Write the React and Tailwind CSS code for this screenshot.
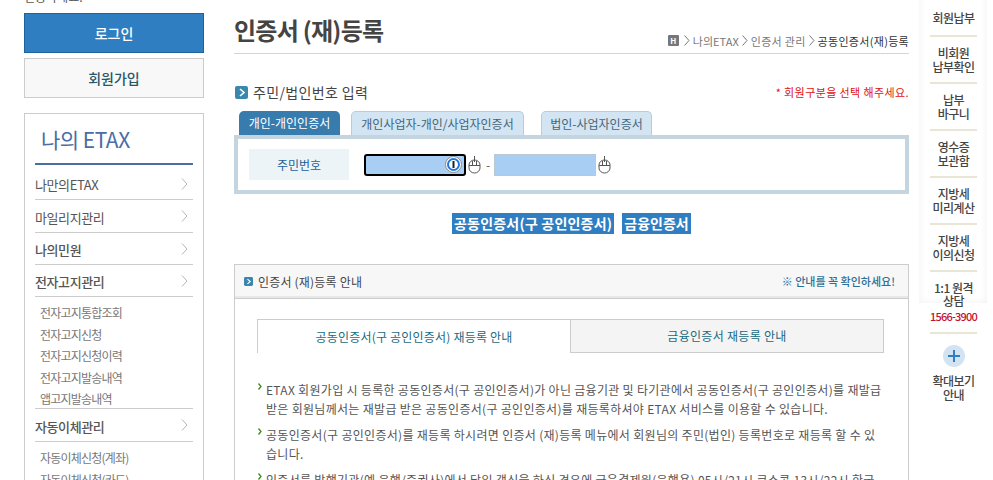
import React from "react";

const font = { fontFamily: '"Noto Sans CJK KR", "Noto Sans", sans-serif' };

const Chevron = () => (
  <svg width="7" height="12" viewBox="0 0 7 12" className="shrink-0">
    <path d="M1 0.5 L6 6 L1 11.5" fill="none" stroke="#b5b5b5" strokeWidth="1" />
  </svg>
);

const CrumbArrow = () => (
  <svg width="6" height="11" viewBox="0 0 6 11" className="shrink-0">
    <path d="M0.5 0.5 L5 5.5 L0.5 10.5" fill="none" stroke="#777" strokeWidth="1" />
  </svg>
);

const Mouse = () => (
  <svg width="13" height="18" viewBox="0 0 13 18" className="shrink-0">
    <path d="M6.5 0 V6 M1 9 a5.5 5 0 0 1 11 0 V12 a5.5 5 0 0 1 -11 0 Z M1 9.5 H12 M4.5 5 V9.5 M8.5 5 V9.5" fill="none" stroke="#555" strokeWidth="1" />
  </svg>
);

const SquareArrow = ({ size = 13 }) => (
  <svg width={size} height={size} viewBox="0 0 13 13" className="shrink-0">
    <rect width="13" height="13" rx="2" fill="#3a86ad" />
    <path d="M5 3 L9 6.5 L5 10" fill="none" stroke="#fff" strokeWidth="1.6" />
  </svg>
);

const KeyIcon = () => (
  <svg width="17" height="17" viewBox="0 0 17 17" className="shrink-0">
    <circle cx="8.5" cy="8.5" r="8" fill="#fff" stroke="#8a8a8a" strokeWidth="1" />
    <circle cx="8.5" cy="8.5" r="5.5" fill="#fff" stroke="#1e7ae0" strokeWidth="2" />
    <rect x="7.5" y="5" width="2" height="7" fill="#222" />
  </svg>
);

const MenuRow = ({ label, h, bold }) => (
  <div className={`flex items-center justify-between border-b border-[#cccccc] ${h} pr-[5px]`}>
    <span className={`mt-[3px] text-[13px] text-[#555] tracking-[-0.4px] ${bold ? "font-medium" : ""}`}>{label}</span>
    <Chevron />
  </div>
);

const SubRow = ({ label }) => (
  <div className="h-[21.5px] leading-[21.5px] text-[12px] text-[#777] tracking-[-0.8px]">{label}</div>
);

const subMenu1 = ["전자고지통합조회", "전자고지신청", "전자고지신청이력", "전자고지발송내역", "앱고지발송내역"];
const subMenu2 = ["자동이체신청(계좌)", "자동이체신청(카드)"];

const Sidebar = () => (
  <aside className="w-[180px] ml-[24px] shrink-0">
    <div className="h-[13px] overflow-hidden relative">
      <div className="text-[12px] leading-[18px] text-[#555] mt-[-12px]">인증하세요.</div>
    </div>
    <div className="h-[40px] bg-[#2f7ec1] border border-[#1f639c] flex items-center justify-center text-white text-[14px] font-medium">
      로그인
    </div>
    <div className="h-[40px] mt-[5px] bg-[#f8f8f8] border border-[#cccccc] flex items-center justify-center text-[#2a5566] text-[14px] font-medium">
      회원가입
    </div>
    <div className="mt-[15px] border border-[#cccccc] px-[10px] pb-[20px]">
      <div className="h-[51px] border-b-2 border-[#4a6da3] pl-[6px] pt-[10px] text-[21px] leading-[30px] text-[#4a6da3] tracking-[-0.5px]">
        나의 ETAX
      </div>
      <MenuRow label="나만의ETAX" h="h-[35px] pt-[3px]" />
      <MenuRow label="마일리지관리" h="h-[33px]" />
      <MenuRow label="나의민원" h="h-[32px]" bold />
      <MenuRow label="전자고지관리" h="h-[32px]" bold />
      <div className="border-b border-[#cccccc] pl-[5px] pt-[5px] h-[112px]">
        {subMenu1.map((s) => (
          <SubRow key={s} label={s} />
        ))}
      </div>
      <MenuRow label="자동이체관리" h="h-[33px]" bold />
      <div className="pl-[5px] pt-[5px]">
        {subMenu2.map((s) => (
          <SubRow key={s} label={s} />
        ))}
      </div>
    </div>
  </aside>
);

const Tab = ({ label, active, w, ml }) => (
  <div
    className={`${w} ${ml} h-[24px] rounded-t-[5px] flex items-center justify-center text-[12px] ${
      active
        ? "bg-[#387bad] text-white"
        : "bg-[#d3e4f2] border border-b-0 border-[#b5cddd] text-[#44667a]"
    }`}
  >
    {label}
  </div>
);

const Bullet = ({ children }) => (
  <li className="flex gap-[4px]">
    <svg width="4" height="7" viewBox="0 0 4 7" className="shrink-0 mt-[3px] ml-[1px]">
      <path d="M0.5 0.5 L3 3.5 L0.5 6.5" fill="none" stroke="#3c8a1a" strokeWidth="1.3" />
    </svg>
    <span className="tracking-[0.3px]">{children}</span>
  </li>
);

const Main = () => (
  <main className="w-[675px] ml-[30px] shrink-0">
    <div className="h-[54px] border-b border-[#d5d5d5] flex items-end justify-between pb-[3px]">
      <h1 className="text-[24px] leading-[36px] font-bold text-[#444] tracking-[-0.75px] mb-[2px]">인증서 (재)등록</h1>
      <div className="flex items-center gap-[3px] text-[11px] text-[#777] pb-[1px]">
        <span className="w-[11px] h-[11px] mr-[2px] bg-[#777] rounded-[1px] text-white text-[8px] leading-[11px] text-center font-bold">H</span>
        <CrumbArrow />
        <span>나의ETAX</span>
        <CrumbArrow />
        <span className="tracking-[0.3px]">인증서 관리</span>
        <CrumbArrow />
        <span className="text-[#333] tracking-[0.3px]">공동인증서(재)등록</span>
      </div>
    </div>
    <div className="mt-[29px] h-[18px] flex items-center justify-between">
      <div className="flex items-center gap-[5px] pl-[1px] text-[14px] text-[#444]">
        <SquareArrow />
        <span className="tracking-[0.35px]">주민/법인번호 입력</span>
      </div>
      <div className="text-[11px] text-[#e01010] tracking-[0.4px]">* 회원구분을 선택 해주세요.</div>
    </div>
    <div className="mt-[10px] flex pl-[5px] h-[24px]">
      <Tab label="개인-개인인증서" active w="w-[101px]" />
      <Tab label="개인사업자-개인/사업자인증서" w="w-[173px]" ml="ml-[11px]" />
      <Tab label="법인-사업자인증서" w="w-[111px]" ml="ml-[17px]" />
    </div>
    <div className="h-[59px] border-[4px] border-[#c5d5e0] flex items-center pl-[11px]">
      <div className="w-[100px] h-[31px] bg-[#edf4f7] flex items-center justify-center text-[12px] text-[#23609a]">주민번호</div>
      <div className="ml-[15px] w-[102px] h-[22px] bg-[#a8cff3] border-2 border-black rounded-[3px] flex items-center justify-end pr-[2px]">
        <KeyIcon />
      </div>
      <span className="ml-[2px]"><Mouse /></span>
      <span className="ml-[5px] text-[12px] text-[#555]">-</span>
      <div className="ml-[4px] w-[102px] h-[22px] bg-[#a8cff3] border border-[#b8c8d4]" />
      <span className="ml-[2px]"><Mouse /></span>
    </div>
    <div className="mt-[19px] flex gap-[8px] h-[21px] pl-[218px]">
      <span className="bg-[#2f7ec1] text-white text-[14px] leading-[21px] font-bold tracking-[0.2px] px-[2px]">공동인증서(구 공인인증서)</span>
      <span className="bg-[#2f7ec1] text-white text-[14px] leading-[21px] font-bold px-[2px]">금융인증서</span>
    </div>
    <section className="mt-[30px] border border-[#cccccc] h-[300px]">
      <div className="h-[34px] bg-[#f7f7f7] border-b border-[#cccccc] shadow-[inset_0_-2px_0_#e8e8e8] flex items-center justify-between pl-[9px] pr-[13px]">
        <div className="flex items-center gap-[5px] text-[12px] text-[#444] tracking-[0.2px]">
          <SquareArrow size={9} />
          <span>인증서 (재)등록 안내</span>
        </div>
        <span className="text-[11px] font-medium text-[#2c6f98]">※ 안내를 꼭 확인하세요!</span>
      </div>
      <div className="px-[22px] pt-[20px]">
        <div className="flex h-[34px] w-[627px]">
          <div className="w-[314px] border border-b-0 border-[#cccccc] bg-white flex items-center justify-center text-[12px] text-[#1a6a80] tracking-[0.2px]">
            공동인증서(구 공인인증서) 재등록 안내
          </div>
          <div className="flex-1 border border-l-0 border-[#cccccc] bg-[#f4f4f4] flex items-center justify-center text-[12px] text-[#1a6a80] tracking-[0.3px]">
            금융인증서 재등록 안내
          </div>
        </div>
        <ul className="mt-[27px] w-[628px] text-[12px] leading-[19px] text-[#555] space-y-[7px]">
          <Bullet>ETAX 회원가입 시 등록한 공동인증서(구 공인인증서)가 아닌 금융기관 및 타기관에서 공동인증서(구 공인인증서)를 재발급 받은 회원님께서는 재발급 받은 공동인증서(구 공인인증서)를 재등록하셔야 ETAX 서비스를 이용할 수 있습니다.</Bullet>
          <Bullet>공동인증서(구 공인인증서)를 재등록 하시려면 인증서 (재)등록 메뉴에서 회원님의 주민(법인) 등록번호로 재등록 할 수 있습니다.</Bullet>
          <Bullet>인증서를 발행기관(예 은행/증권사)에서 당일 갱신을 하신 경우에 금융결제원(은행용) 05시/21시 코스콤 13시/22시 한국</Bullet>
        </ul>
      </div>
    </section>
  </main>
);

const RailItem = ({ lines, h }) => (
  <div className={`${h} border-b-2 border-[#e9e6d6] flex flex-col items-center justify-center text-[12px] font-medium text-[#444] tracking-[-0.5px]`}>
    {lines.map((l) => <div key={l} className="leading-[13.5px] whitespace-nowrap">{l}</div>)}
  </div>
);

const Rail = () => (
  <aside className="w-[68px] ml-[10px] shrink-0 relative">
    <div className="absolute left-0 top-[-10px] w-[68px] h-[313px] shadow-[inset_0_0_8px_rgba(0,0,0,0.06)]" />
    <div className="relative w-[47px] ml-[11px]">
      <RailItem lines={["회원납부"]} h="h-[37px]" />
      <RailItem lines={["비회원", "납부확인"]} h="h-[47px]" />
      <RailItem lines={["납부", "바구니"]} h="h-[47px]" />
      <RailItem lines={["영수증", "보관함"]} h="h-[47px]" />
      <RailItem lines={["지방세", "미리계산"]} h="h-[47px]" />
      <RailItem lines={["지방세", "이의신청"]} h="h-[47px]" />
      <div className="h-[62px] border-b-2 border-[#e9e6d6] flex flex-col items-center justify-center text-[12px] font-medium text-[#444] tracking-[-0.5px]">
        <div className="leading-[13.5px] whitespace-nowrap">1:1 원격</div>
        <div className="leading-[13.5px]">상담</div>
        <div className="text-[11px] leading-[16px] text-[#c8102e] tracking-[-0.8px] whitespace-nowrap">1566-3900</div>
      </div>
      <div className="flex flex-col items-center pt-[11px] text-[12px] font-medium text-[#444] tracking-[-0.5px]">
        <div className="w-[22px] h-[22px] rounded-full bg-[#d3e3f2] flex items-center justify-center">
          <svg width="12" height="12" viewBox="0 0 12 12"><path d="M6 0 V12 M0 6 H12" stroke="#2f7ec1" strokeWidth="2" /></svg>
        </div>
        <div className="mt-[7px] leading-[13.5px] whitespace-nowrap">확대보기</div>
        <div className="leading-[13.5px]">안내</div>
      </div>
    </div>
  </aside>
);

export default function App() {
  return (
    <div className="w-[993px] h-[480px] overflow-hidden bg-white flex" style={font}>
      <Sidebar />
      <Main />
      <Rail />
    </div>
  );
}
